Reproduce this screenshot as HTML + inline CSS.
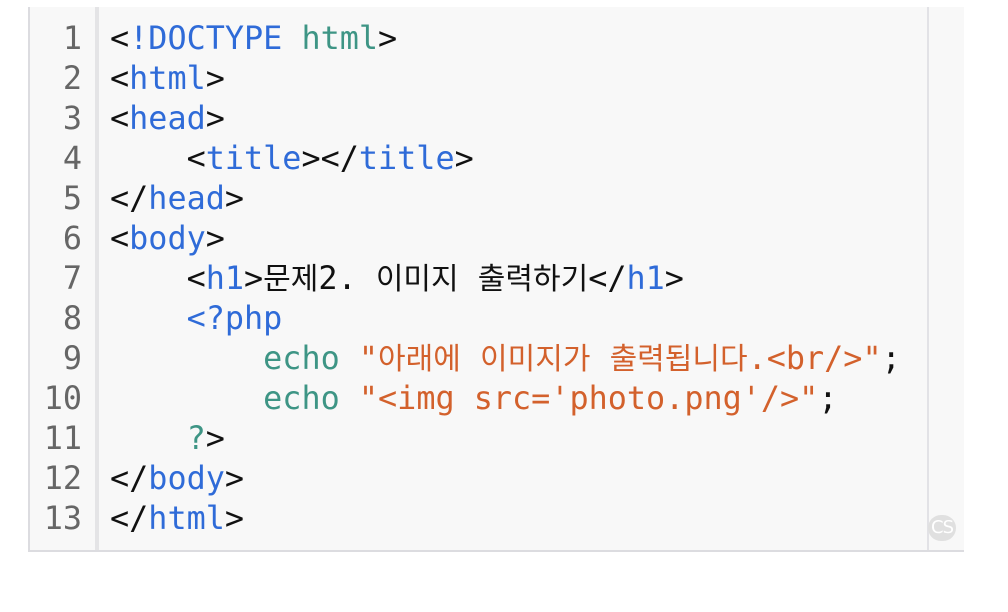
<!DOCTYPE html>
<html><head><meta charset="utf-8"><style>
html,body{margin:0;padding:0;background:#fff;width:1008px;height:612px;overflow:hidden}
.box{position:absolute;left:28px;top:7px;width:934px;height:543px;background:#f8f8f8;border-left:2px solid #dcdce0;border-bottom:2px solid #dcdce0}
.gut{position:absolute;left:0;top:0;width:65px;height:543px;border-right:4px solid #e4e4e6}
.rgt{position:absolute;left:897px;top:0;width:2px;height:543px;background:#e2e2e6}
.ln,.code{position:absolute;top:12px;font-family:"DejaVu Sans Mono","Liberation Mono","Noto Sans CJK KR",monospace;font-size:31.8px;white-space:pre}
.ln div,.code div{height:40px;line-height:40px;overflow:visible}
.ln{left:0;width:52px;text-align:right;color:#666}
.code{left:80px;color:#111}
.b{color:#2f6bd8}.g{color:#3e9585}.o{color:#d3612c}
.k{font-family:"Noto Sans CJK KR",sans-serif;font-size:30px;line-height:0}
.cs{position:absolute;left:898px;top:508px;width:28px;height:26px;border-radius:13px;background:#e0e0e0;color:#fff;font:18px "DejaVu Sans",sans-serif;text-align:center;line-height:26px;letter-spacing:-1px}
</style></head><body>
<div class="box"><div class="gut"></div><div class="rgt"></div>
<div class="ln"><div>1</div><div>2</div><div>3</div><div>4</div><div>5</div><div>6</div><div>7</div><div>8</div><div>9</div><div>10</div><div>11</div><div>12</div><div>13</div></div>
<div class="code"><div>&lt;<span class="b">!DOCTYPE</span> <span class="g">html</span>&gt;</div><div>&lt;<span class="b">html</span>&gt;</div><div>&lt;<span class="b">head</span>&gt;</div><div>    &lt;<span class="b">title</span>&gt;&lt;/<span class="b">title</span>&gt;</div><div>&lt;/<span class="b">head</span>&gt;</div><div>&lt;<span class="b">body</span>&gt;</div><div>    &lt;<span class="b">h1</span>&gt;<span class="k">문제</span>2. <span class="k">이미지</span> <span class="k">출력하기</span>&lt;/<span class="b">h1</span>&gt;</div><div>    <span class="b">&lt;?php</span></div><div>        <span class="g">echo</span> <span class="o">"<span class="k">아래에</span> <span class="k">이미지가</span> <span class="k">출력됩니다</span>.&lt;br/&gt;"</span>;</div><div>        <span class="g">echo</span> <span class="o">"&lt;img src='photo.png'/&gt;"</span>;</div><div>    <span class="g">?</span>&gt;</div><div>&lt;/<span class="b">body</span>&gt;</div><div>&lt;/<span class="b">html</span>&gt;</div></div>
<div class="cs">CS</div>
</div>
</body></html>
